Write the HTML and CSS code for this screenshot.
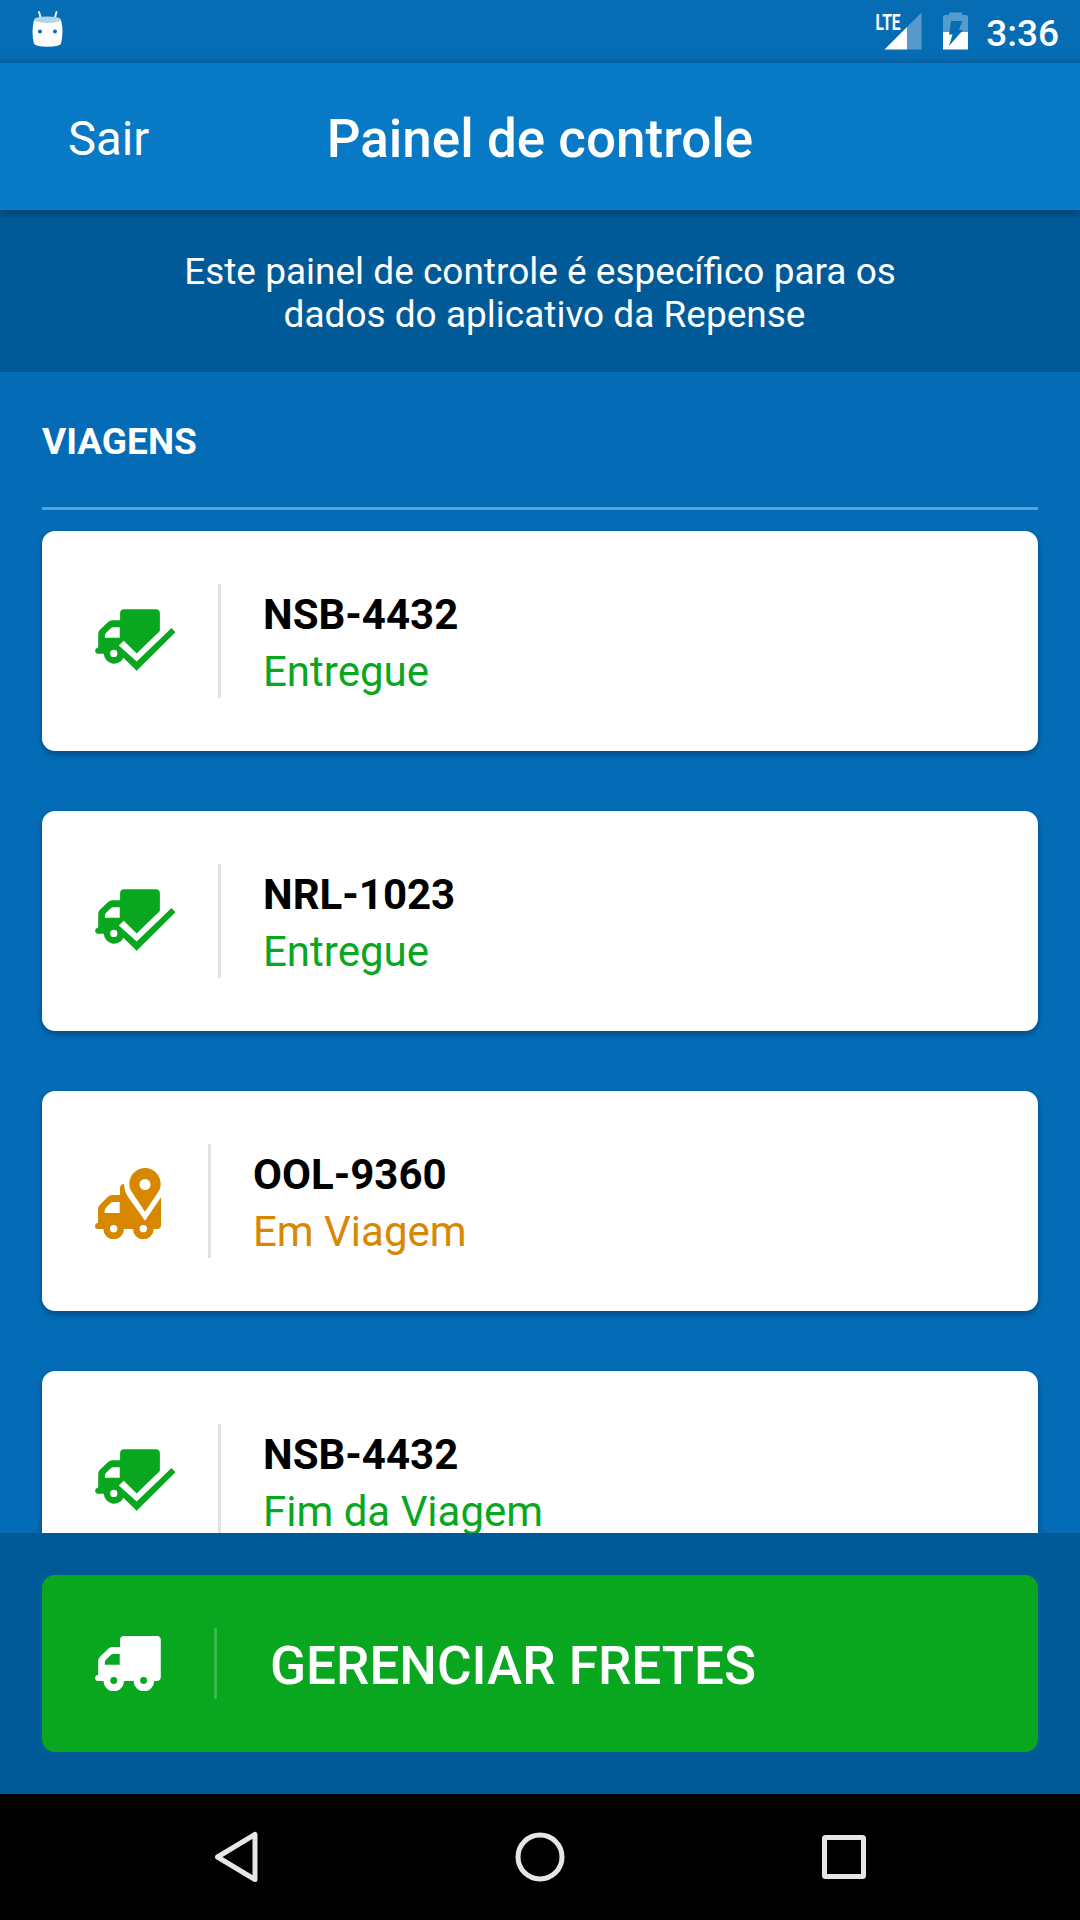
FILE: index.html
```html
<!DOCTYPE html>
<html lang="pt-BR">
<head>
<meta charset="utf-8">
<title>Painel de controle</title>
<link rel="stylesheet" href="styles.css">
</head>
<body>
<svg class="defs" aria-hidden="true">
  <symbol id="truck-check" viewBox="45 56 243 187">
    <path fill-rule="evenodd" d="M120 90V69Q120 57 132 57H228Q240 57 240 69V122L170 190L131 152L116 166L170 214L275 113L287 126L170 242L130 203A31 31 0 0 1 71 191H53Q45 191 45 182Q45 174 54 172V132Q54 124 60 118L83 96Q89 90 97 90ZM119 111H100Q95 111 91 115L78 128Q74 132 74 137V143H119ZM101 179A11 11 0 1 0 101 201A11 11 0 1 0 101 179Z"/>
  </symbol>
  <symbol id="truck-pin" viewBox="45 54 198 213">
    <path fill-rule="evenodd" d="M120 135V114Q122 102 132 101Q133 124 144 140L195 212L243 142V226Q243 237 232 237H221A31 31 0 0 1 159 237H132A31 31 0 0 1 70 237H53Q45 237 45 228Q45 220 54 218V178Q54 170 60 164L83 141Q89 135 97 135ZM119 156H100Q95 156 91 160L78 173Q74 177 74 182V189H119ZM101 225A11 11 0 1 0 101 247A11 11 0 1 0 101 225ZM190 225A11 11 0 1 0 190 247A11 11 0 1 0 190 225Z"/>
    <path fill-rule="evenodd" d="M195 54C221 54 242 75 242 102C242 112 239 120 234 127L195 185L156 127C151 120 148 112 148 102C148 75 169 54 195 54ZM195 87A16.500 16.500 0 1 0 195 120A16.500 16.500 0 1 0 195 87Z"/>
  </symbol>
  <symbol id="truck" viewBox="30 47 198 166">
    <path fill-rule="evenodd" d="M105 80V59Q105 47 117 47H216Q228 47 228 59V170Q228 183 215 183H208A31 31 0 0 1 146 183H117A31 31 0 0 1 55 183H38Q30 183 30 174Q30 166 39 164V123Q39 115 45 109L68 87Q74 80 82 80ZM104 101H85Q80 101 76 105L63 118Q59 122 59 127V134H104ZM86 171A10.500 10.500 0 1 0 86 192A10.500 10.500 0 1 0 86 171ZM176 171A10.500 10.500 0 1 0 176 192A10.500 10.500 0 1 0 176 171Z"/>
  </symbol>
</svg>

<div class="screen">
  <div class="status-bar">
    <svg class="status-android" viewBox="0 0 40 63">
      <path class="antenna" d="M11 12L13 19M28.500 12L26.500 19"/>
      <path class="white" d="M6 20Q19 24 33 20Q36 30 33 44Q31 46.500 19.500 46.700Q8 46.500 6 44Q3 32 6 20Z"/>
      <ellipse class="mouth" cx="19.500" cy="19.700" rx="13.300" ry="3.300"/>
      <circle class="eye" cx="12" cy="31.500" r="2"/>
      <circle class="eye" cx="27" cy="31.500" r="2"/>
    </svg>
    <div class="status-right">
      <svg class="status-signals" viewBox="872 0 100 63">
        <text class="lte" x="875.500" y="29.500" textLength="25" lengthAdjust="spacingAndGlyphs">LTE</text>
        <path class="faded" d="M907 27L921.500 12.500V49.500H907Z"/>
        <path class="white" d="M884.500 49.500L907 27V49.500Z"/>
        <path class="faded" d="M943 32V17Q943 15 945 15H949V12.500H962V15H966Q968 15 968 17V32Z"/>
        <path class="white" d="M943 32H968V49.500H943Z"/>
        <path class="bolt" d="M951 21H962L959 30H963L949 46L952.500 34.500H949Z"/>
      </svg>
      <span class="clock">3:36</span>
    </div>
  </div>

  <header class="app-bar">
    <span class="back">Sair</span>
    <h1 class="title">Painel de controle</h1>
  </header>

  <p class="banner">Este painel de controle é específico para os<br><span class="banner-end">dados do aplicativo da Repense</span></p>

  <main class="content">
    <h2 class="section-title">VIAGENS</h2>
    <div class="trips">
      <article class="card delivered">
        <div class="card-icon"><svg><use href="#truck-check"/></svg></div>
        <div class="card-text"><strong>NSB-4432</strong><span>Entregue</span></div>
      </article>
      <article class="card delivered">
        <div class="card-icon"><svg><use href="#truck-check"/></svg></div>
        <div class="card-text"><strong>NRL-1023</strong><span>Entregue</span></div>
      </article>
      <article class="card traveling">
        <div class="card-icon"><svg><use href="#truck-pin"/></svg></div>
        <div class="card-text"><strong>OOL-9360</strong><span>Em Viagem</span></div>
      </article>
      <article class="card delivered">
        <div class="card-icon"><svg><use href="#truck-check"/></svg></div>
        <div class="card-text"><strong>NSB-4432</strong><span>Fim da Viagem</span></div>
      </article>
    </div>
  </main>

  <footer class="footer">
    <button class="manage">
      <svg><use href="#truck"/></svg>
      <span class="divider"></span>
      <span class="manage-label">GERENCIAR FRETES</span>
    </button>
  </footer>

  <nav class="nav-bar">
    <svg viewBox="0 0 60 60"><path d="M47 7.500V52.500L9.500 30Z"/></svg>
    <svg viewBox="0 0 60 60"><circle cx="30" cy="30" r="22"/></svg>
    <svg viewBox="0 0 60 60"><rect x="12.500" y="10.500" width="39" height="39" rx="1"/></svg>
  </nav>
</div>
</body>
</html>
```
FILE: styles.css
```css
* {
  box-sizing: border-box;
}

body {
  margin: 0;
  font-family: Roboto, sans-serif;
  color: #fff;
}

.defs {
  display: none;
}

.screen {
  display: flex;
  flex-direction: column;
  width: 1080px;
  height: 1920px;
  overflow: hidden;
  background: #046cb7;
}

/* System status bar */
.status-bar {
  display: flex;
  flex: none;
  justify-content: space-between;
  height: 63px;
  padding: 0 21px 0 28px;
  background: #066cb3;
}

.status-bar svg {
  display: block;
  height: 63px;
}

.status-android {
  width: 40px;
}

.status-right {
  display: flex;
  gap: 14px;
}

.status-signals {
  width: 100px;
}

.white {
  fill: #fff;
}

.faded {
  fill: #fff;
  fill-opacity: 0.32;
}

.bolt,
.eye {
  fill: #066cb3;
}

.mouth {
  fill: #b4d3e8;
}

.antenna {
  stroke: #e4f0f8;
  stroke-width: 2;
  stroke-linecap: round;
}

.lte {
  fill: #fff;
  font-size: 22px;
  font-weight: 700;
}

.clock {
  font-size: 37px;
  font-weight: 500;
  line-height: 67px;
}

/* Header */
.app-bar {
  display: grid;
  grid-template-columns: 260px 1fr 260px;
  align-items: center;
  flex: none;
  height: 147px;
  padding-top: 4px;
  background: #0879c5;
  box-shadow: 0 2px 9px rgba(0, 20, 50, 0.5);
  z-index: 1;
}

.back {
  padding: 1px 0 0 68px;
  font-size: 47.25px;
}

.title {
  margin: 0;
  font-size: 53px;
  font-weight: 500;
  text-align: center;
}

.banner {
  flex: none;
  height: 162px;
  margin: 0;
  padding-top: 40px;
  background: #005a97;
  font-size: 37px;
  line-height: 43px;
  text-align: center;
}

.banner-end {
  padding-left: 9px;
}

/* Trip list */
.content {
  flex: 1;
  min-height: 0;
  padding: 48px 42px 0;
  overflow: hidden;
}

.section-title {
  margin: 0 0 21px;
  padding-bottom: 44px;
  border-bottom: 3px solid #5ba2d5;
  font-size: 37px;
  font-weight: 700;
  line-height: 43px;
}

.trips {
  display: flex;
  flex-direction: column;
  gap: 60px;
}

.card {
  display: flex;
  align-items: center;
  flex: none;
  height: 220px;
  padding-left: 53px;
  border-radius: 13px;
  background: #fff;
  box-shadow: 0 3px 6px rgba(0, 20, 50, 0.42);
}

.card-icon {
  display: flex;
  align-items: center;
  height: 114px;
  border-right: 3px solid #e2e2e2;
}

.card-icon svg {
  display: block;
  fill: currentColor;
}

.delivered {
  color: #08a71f;
}

.delivered .card-icon {
  width: 126px;
  padding-bottom: 2px;
}

.delivered svg {
  width: 81px;
  height: 62px;
}

.traveling {
  color: #d88800;
}

.traveling .card-icon {
  width: 116px;
  padding-top: 4px;
}

.traveling svg {
  width: 66px;
  height: 71px;
}

.card-text {
  display: flex;
  flex-direction: column;
  gap: 1px;
  padding: 5px 0 0 42px;
  font-size: 42px;
  line-height: 56px;
}

.card-text strong {
  color: #000;
  font-weight: 700;
}

/* Primary action */
.footer {
  flex: none;
  height: 261px;
  padding: 42px;
  background: #005a97;
}

.manage {
  display: flex;
  align-items: center;
  width: 100%;
  height: 177px;
  padding: 0 0 0 53px;
  border: 0;
  border-radius: 13px;
  background: #08a71f;
  color: #fff;
  font-family: inherit;
  font-size: 53px;
  font-weight: 500;
}

.manage svg {
  width: 66px;
  height: 55px;
  fill: #fff;
}

.divider {
  width: 3px;
  height: 71px;
  margin: 0 53px;
  background: #39b94c;
}

.manage-label {
  padding-top: 4px;
}

/* System navigation */
.nav-bar {
  display: flex;
  align-items: center;
  justify-content: center;
  gap: 242px;
  flex: none;
  height: 126px;
  background: #000;
}

.nav-bar svg {
  width: 60px;
  height: 60px;
  fill: none;
  stroke: #e6e6e6;
  stroke-width: 5;
  stroke-linejoin: round;
}
```
